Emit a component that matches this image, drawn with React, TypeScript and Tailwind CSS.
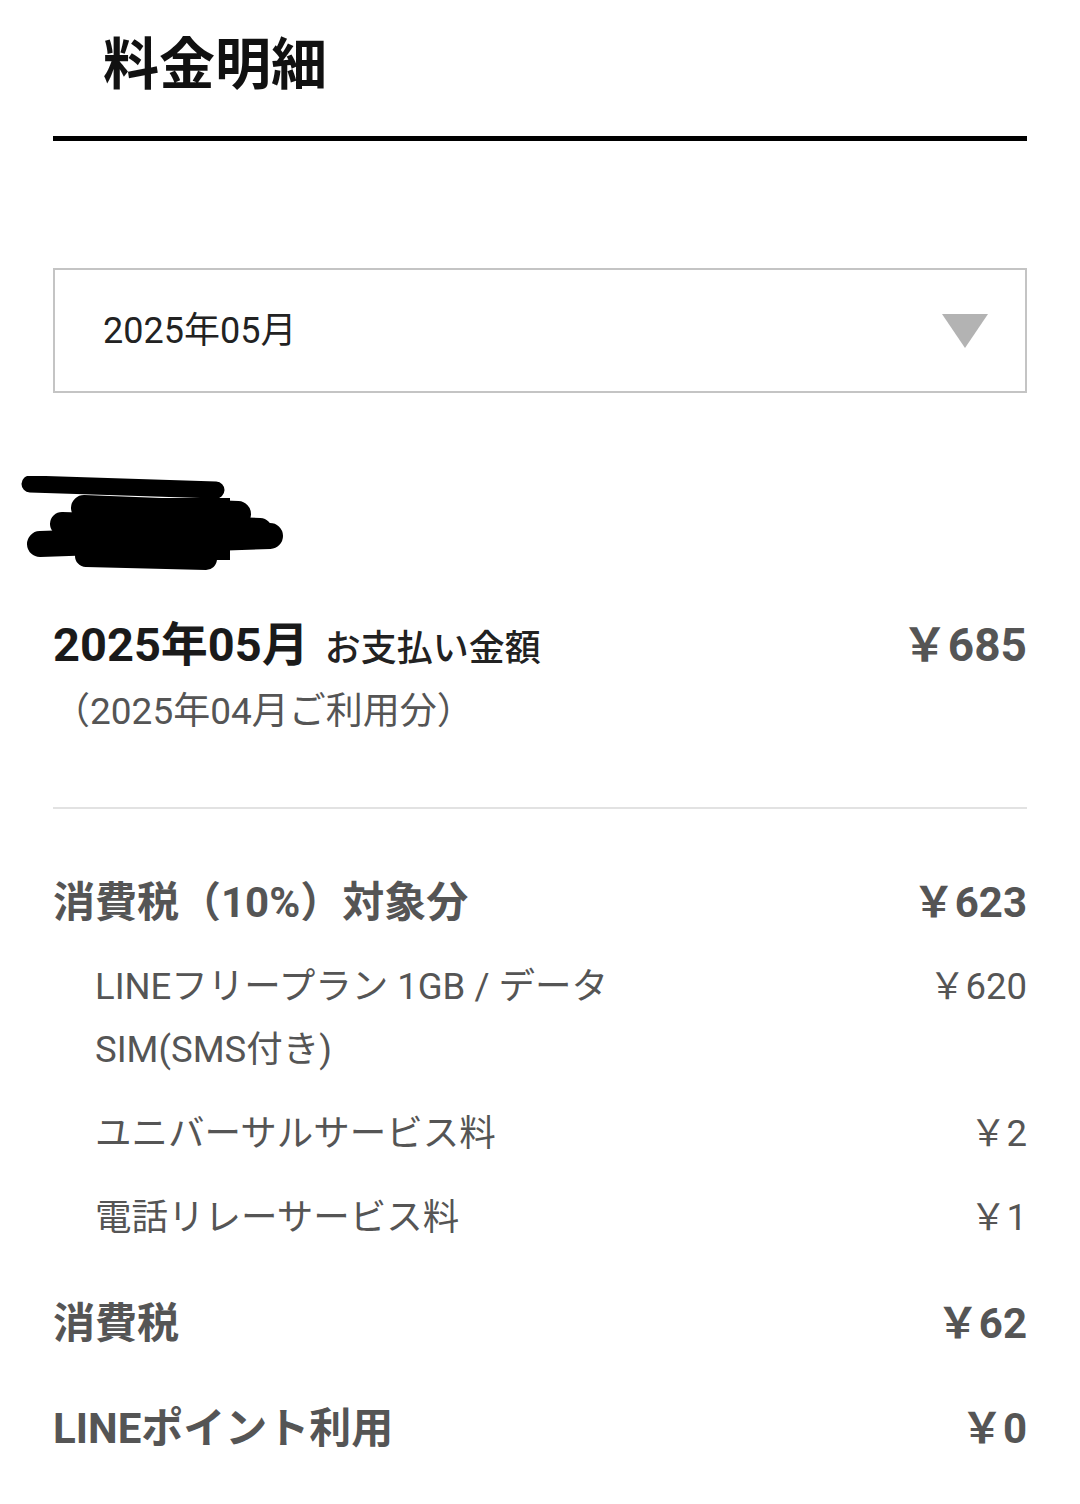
import React from 'react';

const items = [
  { label: 'LINEフリープラン 1GB / データSIM(SMS付き)', labelA: 'LINEフリープラン 1GB / データ', labelB: 'SIM(SMS付き)', price: '￥620' },
  { label: 'ユニバーサルサービス料', price: '￥2' },
  { label: '電話リレーサービス料', price: '￥1' },
];

const Redaction = () => (
  <svg width="280" height="96" viewBox="0 0 280 96" className="-ml-[33px] block">
    <g stroke="#000" strokeLinecap="round" fill="none">
      <line x1="10" y1="8" x2="196" y2="14" strokeWidth="17" />
      <line x1="64" y1="32" x2="218" y2="38" strokeWidth="26" />
      <line x1="42" y1="48" x2="240" y2="54" strokeWidth="24" />
      <line x1="20" y1="68" x2="250" y2="60" strokeWidth="26" />
      <line x1="66" y1="80" x2="186" y2="83" strokeWidth="22" />
    </g>
    <rect x="60" y="22" width="150" height="62" fill="#000" />
  </svg>
);

const SectionRow = ({ label, price, className }: { label: string; price: string; className?: string }) => (
  <div className={`flex items-center justify-between h-[60px] text-[42px] font-bold text-[#555] ${className ?? ''}`}>
    <span>{label}</span>
    <span>{price}</span>
  </div>
);

export default function App() {
  return (
    <div className="w-full min-h-[1504px] bg-white px-[53px] font-[family-name:Roboto,'Noto_Sans_CJK_JP',sans-serif]">
      <h1 className="pt-[32px] pl-[50px] text-[56px] leading-[66px] font-bold text-[#111]">料金明細</h1>
      <div className="mt-[38px] h-[5px] bg-black" />

      <div className="mt-[127px] h-[125px] border-2 border-[#c4c4c4] flex items-center justify-between pl-[48px] pr-[37px]">
        <span className="text-[36px] text-[#222]">2025年05月</span>
        <svg width="46" height="34" viewBox="0 0 46 34">
          <polygon points="0,0 46,0 23,34" fill="#b3b3b3" />
        </svg>
      </div>

      <div className="mt-[83px]">
        <Redaction />
      </div>

      <div className="mt-[43px] flex items-center justify-between h-[60px]">
        <div className="flex items-baseline gap-[16px]">
          <span className="text-[47px] font-bold text-[#1a1a1a]">2025年05月</span>
          <span className="text-[36px] font-medium text-[#222]">お支払い金額</span>
        </div>
        <span className="text-[46px] font-bold text-[#555]">￥685</span>
      </div>
      <p className="mt-[12px] h-[50px] leading-[50px] text-[37px] text-[#555]">（2025年04月ご利用分）</p>

      <div className="mt-[70px] h-[2px] bg-[#e2e2e2]" />

      <SectionRow label="消費税（10%）対象分" price="￥623" className="mt-[63px]" />

      <div className="mt-[23px] flex flex-col gap-[21px]">
        {items.map((item) => (
          <div key={item.label} className="flex justify-between pl-[42px] text-[36.5px] leading-[63px] text-[#555]">
            <span className="w-[590px]">
              {item.labelA ? (
                <>
                  {item.labelA}
                  <br />
                  {item.labelB}
                </>
              ) : (
                item.label
              )}
            </span>
            <span>{item.price}</span>
          </div>
        ))}
      </div>

      <SectionRow label="消費税" price="￥62" className="mt-[44px]" />
      <SectionRow label="LINEポイント利用" price="￥0" className="mt-[45px]" />
    </div>
  );
}
